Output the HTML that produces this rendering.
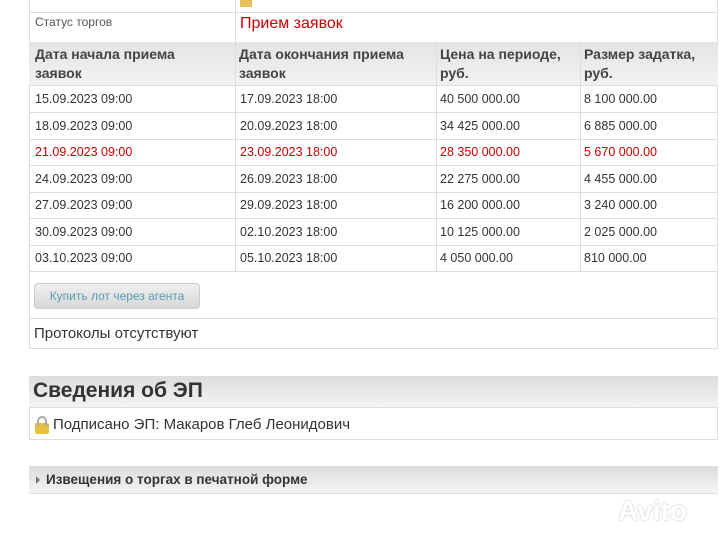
<!DOCTYPE html><html><head><meta charset="utf-8"><style>
body{margin:0;width:720px;height:539px;background:#fff;font-family:"Liberation Sans Narrow","Liberation Sans",sans-serif;color:#333;position:relative;overflow:hidden}
.a{position:absolute;box-sizing:border-box}
.cell{position:absolute;box-sizing:border-box;border-right:1px solid #ddd;border-bottom:1px solid #ddd;padding-left:6px;font-size:12.5px}
.hl{color:#c00}
</style></head><body>
<div class="a" style="left:29px;top:0;width:689px;height:349px;border:1px solid #ddd;border-top:none"></div>
<div class="a" style="left:235px;top:0;width:1px;height:12px;background:#ddd"></div>
<div class="a" style="left:240px;top:0;width:12px;height:7px;background:#e8c35a"></div>
<div class="a" style="left:29px;top:12px;width:689px;height:1px;background:#ddd"></div>
<div class="a" style="left:35px;top:15px;font-size:12px;color:#555">Статус торгов</div>
<div class="a" style="left:235px;top:12px;width:1px;height:30px;background:#ddd"></div>
<div class="a" style="left:240px;top:15px;font-size:16px;color:#c00">Прием заявок</div>
<div class="a" style="left:29px;top:42px;width:689px;height:44px;background:linear-gradient(#e4e4e4,#f2f2f2);border-bottom:1px solid #ddd"></div>
<div class="a" style="left:35px;top:45px;font-size:14px;font-weight:bold;color:#444;line-height:19px">Дата начала приема<br>заявок</div>
<div class="a" style="left:239px;top:45px;font-size:14px;font-weight:bold;color:#444;line-height:19px">Дата окончания приема<br>заявок</div>
<div class="a" style="left:440px;top:45px;font-size:14px;font-weight:bold;color:#444;line-height:19px">Цена на периоде,<br>руб.</div>
<div class="a" style="left:584px;top:45px;font-size:14px;font-weight:bold;color:#444;line-height:19px">Размер задатка,<br>руб.</div>
<div class="a" style="left:235px;top:42px;width:1px;height:229px;background:#ddd"></div>
<div class="a" style="left:436px;top:42px;width:1px;height:229px;background:#ddd"></div>
<div class="a" style="left:580px;top:42px;width:1px;height:229px;background:#ddd"></div>
<div id="rows"></div>
<div class="a" style="left:34px;top:283px;width:166px;height:26px;border-radius:4px;background:linear-gradient(#f0f0f0,#d8d8d8);border:1px solid #ccc;color:#5a9bb5;font-size:12px;text-align:center;line-height:25px">Купить лот через агента</div>
<div class="a" style="left:29px;top:318px;width:689px;height:1px;background:#ddd"></div>
<div class="a" style="left:34px;top:325px;font-size:15px;color:#333">Протоколы отсутствуют</div>
<div class="a" style="left:29px;top:376px;width:689px;height:64px;border:1px solid #ddd"></div>
<div class="a" style="left:29px;top:376px;width:689px;height:32px;background:linear-gradient(#dcdcdc,#f4f4f4);border-bottom:1px solid #ddd"></div>
<div class="a" style="left:33px;top:379px;font-size:21px;font-weight:bold;color:#333">Сведения об ЭП</div>
<div class="a" style="left:35px;top:423px;width:14px;height:11px;background:#e8c040;border-radius:2px"></div>
<div class="a" style="left:37px;top:416px;width:10px;height:10px;border:2px solid #aaa;border-bottom:none;border-radius:5px 5px 0 0"></div>
<div class="a" style="left:53px;top:416px;font-size:15px;color:#333">Подписано ЭП: Макаров Глеб Леонидович</div>
<div class="a" style="left:29px;top:466px;width:689px;height:28px;background:linear-gradient(#dcdcdc,#f4f4f4);border-bottom:1px solid #ddd"></div>
<div class="a" style="left:36px;top:476px;width:0;height:0;border-left:4px solid #777;border-top:4px solid transparent;border-bottom:4px solid transparent"></div>
<div class="a" style="left:46px;top:472px;font-size:13.5px;font-weight:bold;color:#333">Извещения о торгах в печатной форме</div>
<div class="a" style="left:618px;top:495px;font-size:28px;font-weight:bold;color:#fff;text-shadow:0 0 2px #bbb">Avito</div>
<script>
var d=[["15.09.2023 09:00","17.09.2023 18:00","40 500 000.00","8 100 000.00"],["18.09.2023 09:00","20.09.2023 18:00","34 425 000.00","6 885 000.00"],["21.09.2023 09:00","23.09.2023 18:00","28 350 000.00","5 670 000.00"],["24.09.2023 09:00","26.09.2023 18:00","22 275 000.00","4 455 000.00"],["27.09.2023 09:00","29.09.2023 18:00","16 200 000.00","3 240 000.00"],["30.09.2023 09:00","02.10.2023 18:00","10 125 000.00","2 025 000.00"],["03.10.2023 09:00","05.10.2023 18:00","4 050 000.00","810 000.00"]];
var xs=[35,240,440,584],h="";
d.forEach(function(r,i){var t=86+i*26.5;h+='<div class="a" style="left:29px;top:'+(t+26)+'px;width:689px;height:1px;background:#ddd"></div>';r.forEach(function(c,j){h+='<div class="a" style="left:'+xs[j]+'px;top:'+(t+6)+'px;font-size:12.5px;color:'+(i==2?'#c00':'#333')+'">'+c+'</div>'})});
document.getElementById('rows').innerHTML=h;
</script>
</body></html>
